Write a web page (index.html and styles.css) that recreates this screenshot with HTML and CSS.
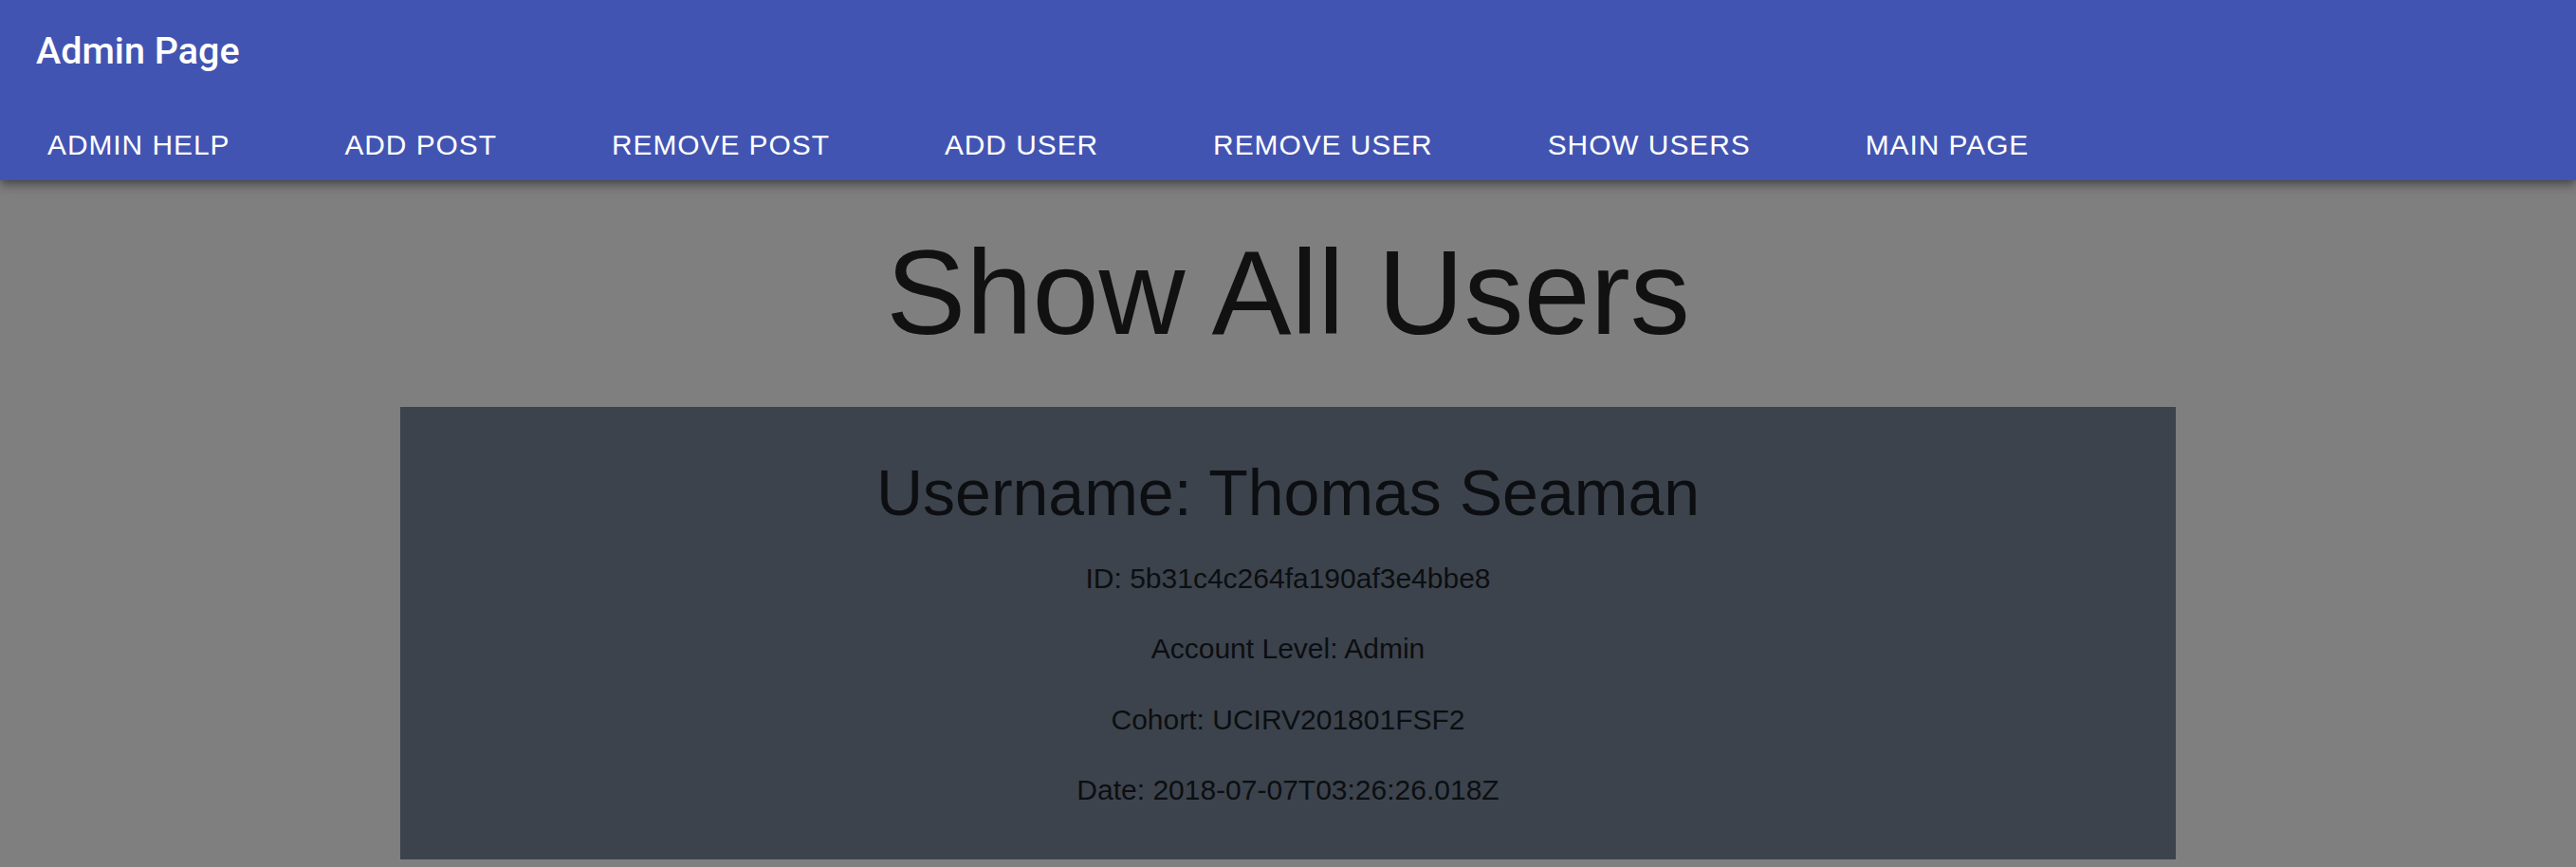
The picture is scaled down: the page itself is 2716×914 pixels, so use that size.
FILE: index.html
```html
<!DOCTYPE html>
<html lang="en">
<head>
<meta charset="utf-8">
<title>Admin Page</title>
<link rel="stylesheet" href="styles.css">
</head>
<body>
<header class="appbar">
  <div class="brand">Admin Page</div>
  <nav class="nav">
    <a class="nav-btn">Admin Help</a>
    <a class="nav-btn">Add Post</a>
    <a class="nav-btn">Remove Post</a>
    <a class="nav-btn">Add User</a>
    <a class="nav-btn">Remove User</a>
    <a class="nav-btn">Show Users</a>
    <a class="nav-btn">Main Page</a>
  </nav>
</header>
<main class="content">
  <h1 class="page-title">Show All Users</h1>
  <section class="user-card">
    <h2 class="user-name">Username: Thomas Seaman</h2>
    <p class="user-field">ID: 5b31c4c264fa190af3e4bbe8</p>
    <p class="user-field">Account Level: Admin</p>
    <p class="user-field">Cohort: UCIRV201801FSF2</p>
    <p class="user-field">Date: 2018-07-07T03:26:26.018Z</p>
  </section>
</main>
</body>
</html>
```
FILE: styles.css
```css
html, body {
  margin: 0;
  padding: 0;
}
body {
  background: #7f7f7f;
  font-family: "Liberation Sans", Arial, sans-serif;
  min-height: 914px;
}
.appbar {
  position: relative;
  z-index: 2;
  box-sizing: border-box;
  height: 190px;
  background: #4254b2;
  color: #fff;
  box-shadow: 0 3px 7px -2px rgba(0,0,0,.3), 0 7px 9px rgba(0,0,0,.18), 0 2px 17px rgba(0,0,0,.14);
}
.brand {
  font-family: Roboto, "Liberation Sans", sans-serif;
  font-weight: 500;
  font-size: 39.5px;
  line-height: 50px;
  padding: 29px 0 0 38px;
}
.nav {
  display: flex;
  gap: 121px;
  padding: 57px 0 0 50px;
}
.nav-btn {
  font-family: "Liberation Sans", Arial, sans-serif;
  font-size: 29.9px;
  line-height: 34px;
  letter-spacing: 0.97px;
  text-transform: uppercase;
  color: #fff;
  white-space: nowrap;
}
.content {
  text-align: center;
}
.page-title {
  margin: 43px 0 45px;
  font-size: 126px;
  line-height: 1.2;
  font-weight: 400;
  color: #111;
}
.user-card {
  box-sizing: border-box;
  width: 1872px;
  margin: 0 auto;
  padding: 50px 0 56px;
  background: #3c434c;
  color: #0c0e11;
}
.user-name {
  margin: 0 0 32px;
  font-size: 68px;
  line-height: 1.2;
  font-weight: 400;
}
.user-field {
  margin: 0 0 40.5px;
  font-size: 30px;
  line-height: 34px;
}
.user-field:last-child {
  margin-bottom: 0;
}
```
